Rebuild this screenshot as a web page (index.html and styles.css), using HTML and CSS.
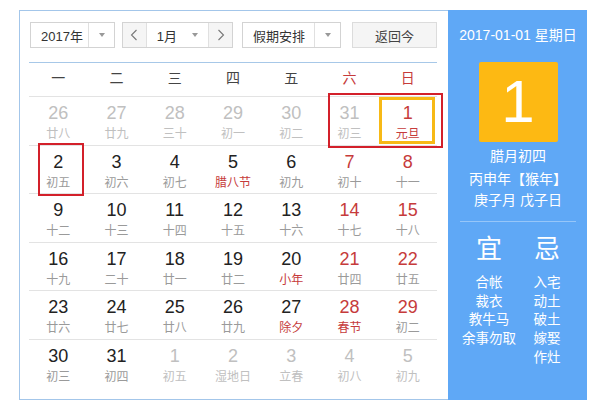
FILE: index.html
```html
<!DOCTYPE html>
<html lang="zh-CN">
<head>
<meta charset="utf-8">
<title>万年历</title>
<link rel="stylesheet" href="styles.css">
</head>
<body>
<div class="frame">
  <div class="main">
    <div class="toolbar">
      <div class="select year">
        <span class="sel-text">2017年</span>
        <span class="sel-arrow"><i class="tri"></i></span>
      </div>
      <div class="month-group">
        <span class="nav"><svg width="8" height="12" viewBox="0 0 8 12"><polyline points="6.5,1 1.5,6 6.5,11" fill="none" stroke="#777" stroke-width="1.1"/></svg></span>
        <div class="month-sel">
          <span class="sel-text">1月</span>
          <span class="month-arrow"><i class="tri"></i></span>
        </div>
        <span class="nav"><svg width="8" height="12" viewBox="0 0 8 12"><polyline points="1.5,1 6.5,6 1.5,11" fill="none" stroke="#777" stroke-width="1.1"/></svg></span>
      </div>
      <div class="select holiday">
        <span class="sel-text">假期安排</span>
        <span class="sel-arrow"><i class="tri"></i></span>
      </div>
      <div class="btn-today">返回今</div>
    </div>

    <div class="weekdays">
      <span>一</span><span>二</span><span>三</span><span>四</span><span>五</span><span class="red">六</span><span class="red">日</span>
    </div>

    <div class="weeks">
      <div class="week">
        <div class="cell other"><b>26</b><small>廿八</small></div>
        <div class="cell other"><b>27</b><small>廿九</small></div>
        <div class="cell other"><b>28</b><small>三十</small></div>
        <div class="cell other"><b>29</b><small>初一</small></div>
        <div class="cell other"><b>30</b><small>初二</small></div>
        <div class="cell other"><b>31</b><small>初三</small></div>
        <div class="cell weekend"><b>1</b><small class="fest">元旦</small></div>
      </div>
      <div class="week">
        <div class="cell"><b>2</b><small>初五</small></div>
        <div class="cell"><b>3</b><small>初六</small></div>
        <div class="cell"><b>4</b><small>初七</small></div>
        <div class="cell"><b>5</b><small class="fest">腊八节</small></div>
        <div class="cell"><b>6</b><small>初九</small></div>
        <div class="cell weekend"><b>7</b><small>初十</small></div>
        <div class="cell weekend"><b>8</b><small>十一</small></div>
      </div>
      <div class="week">
        <div class="cell"><b>9</b><small>十二</small></div>
        <div class="cell"><b>10</b><small>十三</small></div>
        <div class="cell"><b>11</b><small>十四</small></div>
        <div class="cell"><b>12</b><small>十五</small></div>
        <div class="cell"><b>13</b><small>十六</small></div>
        <div class="cell weekend"><b>14</b><small>十七</small></div>
        <div class="cell weekend"><b>15</b><small>十八</small></div>
      </div>
      <div class="week">
        <div class="cell"><b>16</b><small>十九</small></div>
        <div class="cell"><b>17</b><small>二十</small></div>
        <div class="cell"><b>18</b><small>廿一</small></div>
        <div class="cell"><b>19</b><small>廿二</small></div>
        <div class="cell"><b>20</b><small class="fest">小年</small></div>
        <div class="cell weekend"><b>21</b><small>廿四</small></div>
        <div class="cell weekend"><b>22</b><small>廿五</small></div>
      </div>
      <div class="week">
        <div class="cell"><b>23</b><small>廿六</small></div>
        <div class="cell"><b>24</b><small>廿七</small></div>
        <div class="cell"><b>25</b><small>廿八</small></div>
        <div class="cell"><b>26</b><small>廿九</small></div>
        <div class="cell"><b>27</b><small class="fest">除夕</small></div>
        <div class="cell weekend"><b>28</b><small class="fest">春节</small></div>
        <div class="cell weekend"><b>29</b><small>初二</small></div>
      </div>
      <div class="week last">
        <div class="cell"><b>30</b><small>初三</small></div>
        <div class="cell"><b>31</b><small>初四</small></div>
        <div class="cell other"><b>1</b><small>初五</small></div>
        <div class="cell other"><b>2</b><small>湿地日</small></div>
        <div class="cell other"><b>3</b><small>立春</small></div>
        <div class="cell other"><b>4</b><small>初八</small></div>
        <div class="cell other"><b>5</b><small>初九</small></div>
      </div>
    </div>
  </div>

  <div class="side">
    <div class="side-date">2017-01-01 星期日</div>
    <div class="big-day">1</div>
    <div class="lunar">
      <p class="lunar-first">腊月初四</p>
      <p>丙申年【猴年】</p>
      <p>庚子月 戊子日</p>
    </div>
    <div class="side-sep"></div>
    <div class="yiji">
      <div class="yj-col">
        <div class="yj-title">宜</div>
        <ul class="yj-list">
          <li>合帐</li><li>裁衣</li><li>教牛马</li><li>余事勿取</li>
        </ul>
      </div>
      <div class="yj-col">
        <div class="yj-title">忌</div>
        <ul class="yj-list">
          <li>入宅</li><li>动土</li><li>破土</li><li>嫁娶</li><li>作灶</li>
        </ul>
      </div>
    </div>
  </div>

  <div class="mark mark-today"></div>
  <div class="mark mark-weekend"></div>
  <div class="mark mark-selected"></div>
</div>
</body>
</html>
```

FILE: styles.css
```css
* { box-sizing: border-box; }

html, body {
  margin: 0;
  padding: 0;
  background: #fff;
}

body {
  font-family: "Liberation Sans", "Noto Sans CJK SC", sans-serif;
  color: #333;
}

.frame {
  position: relative;
  display: flex;
  margin: 10px 0 0 19px;
  width: 568px;
  height: 390px;
}

/* ---------- left calendar ---------- */
.main {
  width: 429px;
  height: 390px;
  border: 1px solid #a3c6ea;
  border-right: none;
  padding: 11px 11px 0 9px;
}

.toolbar {
  display: flex;
  align-items: center;
  padding: 0 0 14px 1px;
  border-bottom: 1px solid #a7c8e8;
  box-sizing: content-box;
  height: 26px;
  font-size: 13px;
  color: #333;
}

.select {
  display: flex;
  height: 26px;
  border: 1px solid #d3d3d3;
  background: #fff;
}

.sel-text {
  display: flex;
  align-items: center;
  padding-left: 10px;
  flex: 1;
}

.sel-arrow {
  width: 26px;
  border-left: 1px solid #e0e0e0;
  display: flex;
  align-items: center;
  justify-content: center;
}

.tri {
  display: block;
  width: 0;
  height: 0;
  border-left: 3.5px solid transparent;
  border-right: 3.5px solid transparent;
  border-top: 4px solid #999;
}

.year { width: 85px; margin-right: 7px; }

.month-group {
  display: flex;
  width: 111px;
  height: 26px;
  border: 1px solid #d3d3d3;
  margin-right: 9px;
}

.nav {
  width: 23px;
  background: #f5f5f5;
  display: flex;
  align-items: center;
  justify-content: center;
}

.month-sel {
  display: flex;
  width: 64px;
  background: #fff;
  border-left: 1px solid #e0e0e0;
  border-right: 1px solid #e0e0e0;
}

.month-sel .sel-text { padding-left: 10px; }

.month-arrow {
  width: 26px;
  display: flex;
  align-items: center;
  justify-content: center;
}

.holiday { width: 99px; margin-right: 11px; }
.holiday .sel-text { padding-left: 10px; }

.btn-today {
  width: 85px;
  height: 26px;
  border: 1px solid #dcdcdc;
  background: #f5f5f5;
  display: flex;
  align-items: center;
  justify-content: center;
  color: #444;
}

.weekdays {
  display: grid;
  grid-template-columns: repeat(7, 1fr);
  height: 34px;
  line-height: 31px;
  border-bottom: 1px solid #e3e3e3;
  font-size: 14px;
  text-align: center;
  color: #444;
}

.red { color: #c63b3b; }

.week {
  display: grid;
  grid-template-columns: repeat(7, 1fr);
  height: 48.6px;
  border-bottom: 1px solid #e3e3e3;
}

.week.last { border-bottom: none; }

.cell {
  display: flex;
  flex-direction: column;
  align-items: center;
  padding-top: 6px;
}

.cell b {
  font-weight: normal;
  font-size: 18px;
  line-height: 20px;
  color: #222;
}

.cell small {
  font-size: 12px;
  line-height: 16px;
  margin-top: 3px;
  color: #9a9a9a;
}

.cell.weekend b { color: #c63b3b; }
.cell small.fest { color: #c63b3b; }

.cell.other b { color: #c0c0c0; }
.cell.other small { color: #c0c0c0; }

/* ---------- right panel ---------- */
.side {
  width: 139px;
  height: 390px;
  background: #5fa8f6;
  color: #fff;
  display: flex;
  flex-direction: column;
  align-items: center;
  padding: 15px 11px 0 12px;
}

.side-date {
  font-size: 14px;
  line-height: 20px;
  white-space: nowrap;
}

.big-day {
  margin-top: 17px;
  width: 79px;
  height: 80px;
  background: #fdb913;
  border-radius: 2px;
  font-size: 60px;
  line-height: 80px;
  text-align: center;
  color: #fff;
}

.lunar {
  margin-top: 4px;
  text-align: center;
  font-size: 14px;
}

.lunar p {
  margin: 0;
  line-height: 21px;
}

.lunar .lunar-first { margin-bottom: 2px; }

.side-sep {
  width: 100%;
  height: 1px;
  background: rgba(255, 255, 255, 0.35);
  margin-top: 10px;
}

.yiji {
  display: flex;
  width: 100%;
  margin-top: 12px;
}

.yj-col {
  flex: 1;
  text-align: center;
}

.yj-title {
  font-size: 26px;
  line-height: 30px;
}

.yj-list {
  list-style: none;
  margin: 10px 0 0;
  padding: 0;
  font-size: 13.5px;
  line-height: 18.7px;
}

/* ---------- annotation marks ---------- */
.mark {
  position: absolute;
  pointer-events: none;
}

.mark-today {
  left: 19px;
  top: 133px;
  width: 46px;
  height: 53px;
  border: 2px solid #d3202a;
}

.mark-weekend {
  left: 309px;
  top: 83px;
  width: 115px;
  height: 55px;
  border: 2px solid #d3202a;
}

.mark-selected {
  left: 360px;
  top: 87px;
  width: 56px;
  height: 47px;
  border: 3px solid #f7b916;
}
```
